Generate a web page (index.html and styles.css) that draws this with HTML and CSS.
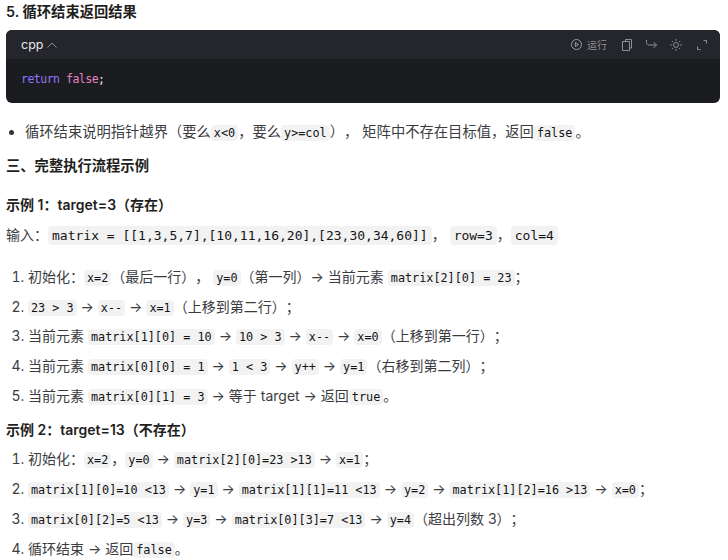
FILE: index.html
```html
<!DOCTYPE html>
<html lang="zh-CN">
<head>
<meta charset="utf-8">
<title>完整执行流程示例</title>
<link rel="stylesheet" href="styles.css">
</head>
<body>
<h4 class="step-title">5. 循环结束返回结果</h4>
<section class="code-card">
  <header class="code-head">
    <div class="lang">cpp
      <svg class="chev" width="10" height="6" viewBox="0 0 10 6"><path d="M.5 5.500 5 1l4.500 4.500" fill="none" stroke="#8b8c90"/></svg>
    </div>
    <div class="tools">
      <span class="run">
        <svg width="11" height="11" viewBox="0 0 11 11"><circle cx="5.500" cy="5.500" r="5" fill="none" stroke="#9a9ba0"/><path d="M4.300 3.500v4L7.500 5.500z" fill="none" stroke="#9a9ba0"/></svg>
        运行
      </span>
      <svg width="10" height="12" viewBox="0 0 10 12"><path d="M3.500 2.500V.5h6v8.500H7.500M.5 2.500h7v9h-7z" fill="none" stroke="#8f9095"/></svg>
      <svg class="arrow" width="11" height="9" viewBox="0 0 11 9"><path d="M.5 0v2.500c0 1.500 1 2.500 2.500 2.500h7.500M7.500 2l3 3-3 3" fill="none" stroke="#8f9095"/></svg>
      <svg class="sun" width="12" height="12" viewBox="0 0 13 13"><circle cx="6.500" cy="6.500" r="2.700" fill="none" stroke="#8f9095"/><path d="M6.500 0v2M6.500 11v2M0 6.500h2M11 6.500h2M2 2l1.300 1.300M9.700 9.700 11 11M2 11l1.300-1.300M9.700 3.300 11 2" fill="none" stroke="#8f9095"/></svg>
      <svg width="10" height="10" viewBox="0 0 10 10"><path d="M6.500.5h3v3M.5 6.500v3h3" fill="none" stroke="#8f9095"/></svg>
    </div>
  </header>
  <pre class="code-body"><code><span class="kw">return</span> <span class="lit">false</span><span class="pn">;</span></code></pre>
</section>
<ul class="bullets">
  <li>循环结束说明指针越界（要么<code>x&lt;0</code>，要么<code>y&gt;=col</code>）， 矩阵中不存在目标值，返回<code>false</code>。</li>
</ul>
<h3 class="sec">三、完整执行流程示例</h3>
<h4 class="ex">示例 1：target=3（存在）</h4>
<p class="input">输入：<code>matrix = [[1,3,5,7],[10,11,16,20],[23,30,34,60]]</code>， <code>row=3</code>，<code>col=4</code></p>
<ol class="steps first">
  <li>初始化：<code>x=2</code>（最后一行）， <code>y=0</code>（第一列）→ 当前元素 <code>matrix[2][0] = 23</code>；</li>
  <li><code>23 &gt; 3</code> → <code>x--</code> → <code>x=1</code>（上移到第二行）；</li>
  <li>当前元素 <code>matrix[1][0] = 10</code> → <code>10 &gt; 3</code> → <code>x--</code> → <code>x=0</code>（上移到第一行）；</li>
  <li>当前元素 <code>matrix[0][0] = 1</code> → <code>1 &lt; 3</code> → <code>y++</code> → <code>y=1</code>（右移到第二列）；</li>
  <li>当前元素 <code>matrix[0][1] = 3</code> → 等于 target → 返回<code>true</code>。</li>
</ol>
<h4 class="ex second">示例 2：target=13（不存在）</h4>
<ol class="steps">
  <li>初始化：<code>x=2</code>，<code>y=0</code> → <code>matrix[2][0]=23 &gt;13</code> → <code>x=1</code>；</li>
  <li><code>matrix[1][0]=10 &lt;13</code> → <code>y=1</code> → <code>matrix[1][1]=11 &lt;13</code> → <code>y=2</code> → <code>matrix[1][2]=16 &gt;13</code> → <code>x=0</code>；</li>
  <li><code>matrix[0][2]=5 &lt;13</code> → <code>y=3</code> → <code>matrix[0][3]=7 &lt;13</code> → <code>y=4</code>（超出列数 3）；</li>
  <li>循环结束 → 返回<code>false</code>。</li>
</ol>
</body>
</html>
```
FILE: styles.css
```css
html, body { margin: 0; padding: 0; background: #fff; }
body {
  padding: 0 8px 0 6px;
  font: 14px/20px Inter, "Noto Sans CJK SC", sans-serif;
  color: #3c3c3f;
  height: 560px;
  overflow: hidden;
  box-sizing: border-box;
  text-spacing-trim: space-all;
}
code {
  font-family: "DejaVu Sans Mono", "Noto Sans CJK SC", monospace;
  font-size: 11.800px;
  line-height: 1;
  background: #f2f2f2;
  color: #141416;
  border-radius: 4px;
  padding: 1px 3px;
}
h3, h4 { margin: 0; font-weight: 600; color: #1f1f22; font-size: 14px; line-height: 20px; }
.step-title { margin-top: 2px; font-size: 14.300px; }
.code-card {
  margin-top: 8px;
  height: 73px;
  border-radius: 6px;
  background: #1b1c20;
  overflow: hidden;
}
.code-head {
  height: 29px;
  background: #25262b;
  display: flex;
  align-items: center;
  justify-content: space-between;
  padding: 0 13px 0 15px;
  color: #e6e6e8;
}
.lang { font-size: 12.500px; display: flex; align-items: center; gap: 4px; }
.tools { display: flex; align-items: center; gap: 15px; }
.arrow { margin-left: -1px; }
.sun { margin-left: -2px; }
.run { display: flex; align-items: center; gap: 5px; font-size: 10px; color: #8f9095; }
.code-body { margin: 0; padding: 9px 16px 9px 15px; }
.code-body code { background: none; padding: 0; font-size: 11.500px; line-height: 18px; letter-spacing: -.5px; color: #d8d8dc; }
.kw { color: #9074ff; }
.lit { color: #e880c8; }
.pn { color: #e6e6ea; }
.bullets { margin: 19px 0 0; padding: 0 0 0 19px; font-size: 14.300px; }
.bullets li::marker { color: #333; }
.sec { margin-top: 14px; font-size: 14.300px; }
.ex { margin-top: 19px; }
.input { margin: 10px 0 0; }
.input code { font-size: 13px; padding: 2px 4px; }
.steps { margin: 0; padding: 0 0 0 22px; }
.steps li { margin-top: 9.700px; }
.first { margin-top: 22px; }
.second { margin-top: 14px; }
```
